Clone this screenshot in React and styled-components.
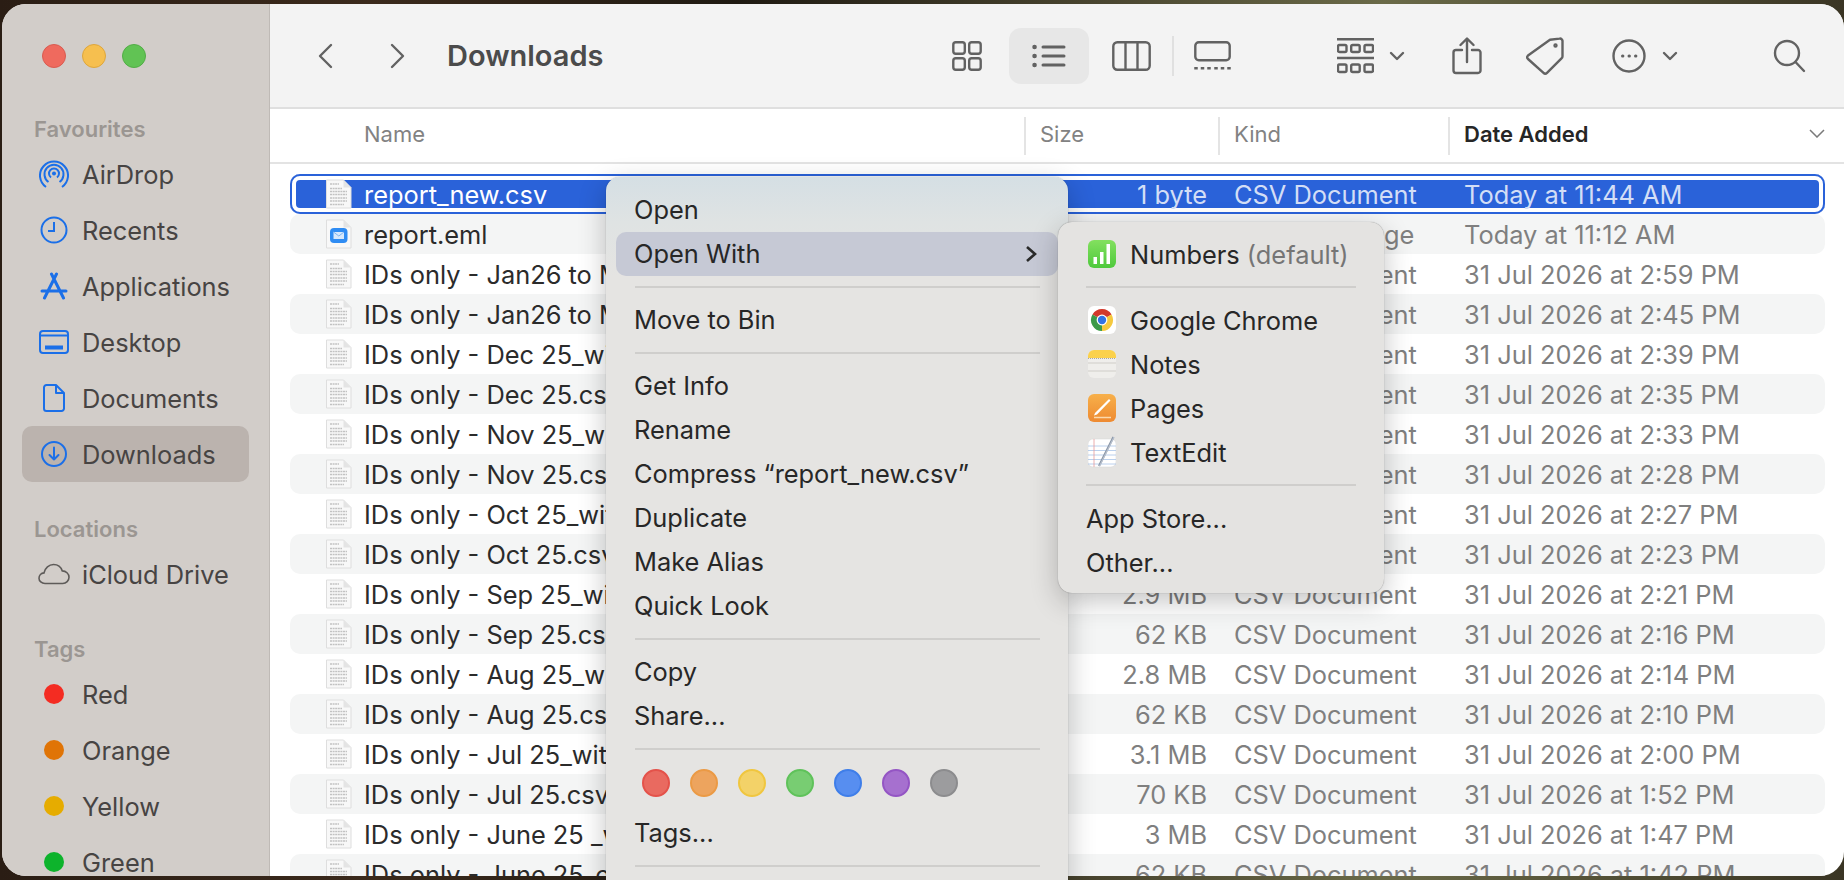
import React from 'react'
import styled, { createGlobalStyle } from 'styled-components'

const Global = createGlobalStyle`
  html, body {
    margin: 0;
    height: 100%;
    overflow: hidden;
    background: linear-gradient(90deg, #2a1d14 0%, #3b2a1c 20%, #1f1a12 40%, #4a4630 60%, #6a6a48 75%, #3a3524 100%);
    font-family: Inter, "Liberation Sans", sans-serif;
  }
`

const Page = styled.div`
  position: relative;
  height: 880px;
  box-sizing: border-box;
  padding: 4px 0 4px 2px;
  overflow: hidden;
`

const Window = styled.div`
  display: flex;
  height: 872px;
  border-radius: 24px;
  overflow: hidden;
  background: #fff;
`

const Sidebar = styled.aside`
  flex: none;
  width: 268px;
  box-sizing: border-box;
  padding: 40px 20px 0;
  background: #d2cdc9;
  border-right: 1px solid #bfbab6;
`

const Lights = styled.div`
  display: flex;
  gap: 16px;
  padding-left: 20px;
  margin-bottom: 47px;
`

const Light = styled.span`
  width: 24px;
  height: 24px;
  box-sizing: border-box;
  border-radius: 50%;
  background: ${p => p.$bg};
  border: 1px solid ${p => p.$edge};
`

const SideLabel = styled.div`
  height: 28px;
  line-height: 28px;
  padding-left: 12px;
  margin-top: ${p => p.$top || 0}px;
  margin-bottom: 3px;
  font-size: 22px;
  font-weight: 600;
  color: #9b9692;
`

const SideItem = styled.div`
  display: flex;
  align-items: center;
  height: 56px;
  border-radius: 10px;
  background: ${p => (p.$active ? '#bbb3ae' : 'transparent')};
  font-size: 25.400px;
  color: #474443;
`

const SideIconBox = styled.span`
  flex: none;
  display: flex;
  justify-content: center;
  width: 64px;
  margin-right: -4px;
`

const TagDot = styled.span`
  width: 20px;
  height: 20px;
  border-radius: 50%;
  background: ${p => p.$color};
`

const Main = styled.main`
  flex: 1;
  min-width: 0;
  display: flex;
  flex-direction: column;
`

const Toolbar = styled.header`
  flex: none;
  display: flex;
  align-items: center;
  height: 105px;
  box-sizing: border-box;
  padding: 0 38px 0 47px;
  background: #f3f3f3;
  border-bottom: 2px solid #dfdfdf;
`

const Title = styled.h1`
  flex: 1;
  margin: 0 0 0 41px;
  font-size: 29px;
  font-weight: 600;
  color: #4b4b4b;
`

const ToolIcon = styled.svg`
  flex: none;
  margin-left: ${p => p.$ml || 0}px;
  fill: none;
  stroke: #626262;
  stroke-width: 2.400;
  stroke-linecap: round;
  stroke-linejoin: round;
`

const ViewButton = styled.div`
  flex: none;
  display: flex;
  align-items: center;
  justify-content: center;
  width: 80px;
  height: 56px;
  margin-left: 27px;
  border-radius: 12px;
  background: #e7e7e7;
`

const ToolSep = styled.span`
  flex: none;
  width: 2px;
  height: 40px;
  margin-left: 21px;
  background: #e0e0e0;
`

const ColumnBar = styled.div`
  flex: none;
  display: flex;
  align-items: center;
  height: 55px;
  box-sizing: border-box;
  background: #fff;
  border-bottom: 2px solid #e3e3e3;
  font-size: 22px;
  color: #828282;
`

const Column = styled.div`
  flex: ${p => (p.$w ? `none` : 1)};
  display: flex;
  align-items: center;
  justify-content: space-between;
  width: ${p => (p.$w ? `${p.$w}px` : 'auto')};
  height: 38px;
  box-sizing: border-box;
  padding: 0 19px 4px ${p => p.$pad}px;
  border-left: ${p => (p.$first ? 'none' : '2px solid #e4e4e4')};
  font-weight: ${p => (p.$sorted ? 600 : 400)};
  color: ${p => (p.$sorted ? '#262626' : '#828282')};
`

const List = styled.div`
  flex: 1;
  min-height: 0;
  padding: 10px 19px 0 20px;
  overflow: hidden;
`

const Row = styled.div`
  display: flex;
  align-items: center;
  height: 40px;
  border-radius: 10px;
  font-size: 25.400px;
  white-space: nowrap;
  background: ${p => (p.$selected ? '#2a62d9' : p.$odd ? '#f4f5f5' : '#fff')};
  box-shadow: ${p => (p.$selected ? 'inset 0 0 0 2px #2a62d9, inset 0 0 0 6px #fff' : 'none')};
`

const NameCell = styled.div`
  flex: none;
  display: flex;
  align-items: center;
  gap: 12px;
  width: 735px;
  box-sizing: border-box;
  padding-left: 36px;
  overflow: hidden;
  color: ${p => (p.$selected ? '#fff' : '#2b2b2b')};
`

const SizeCell = styled.div`
  flex: none;
  width: 182px;
  text-align: right;
  color: ${p => (p.$selected ? '#d3def6' : '#7f7f7f')};
`

const KindCell = styled.div`
  flex: none;
  width: 230px;
  margin-left: 27px;
  color: ${p => (p.$selected ? '#d3def6' : '#7f7f7f')};
`

const DateCell = styled.div`
  flex: 1;
  color: ${p => (p.$selected ? '#d3def6' : '#7f7f7f')};
`

const Menu = styled.div`
  position: absolute;
  left: ${p => p.$left}px;
  top: ${p => p.$top}px;
  width: ${p => p.$width}px;
  height: ${p => (p.$height ? `${p.$height}px` : 'auto')};
  box-sizing: border-box;
  padding: ${p => p.$pad};
  border-radius: ${p => p.$radius};
  background: ${p => p.$bg};
  box-shadow: 0 0 1px rgba(0, 0, 0, 0.45), 0 8px 28px rgba(0, 0, 0, 0.24);
  font-size: 25.400px;
  color: #272727;
`

const MenuItem = styled.div`
  display: flex;
  align-items: center;
  justify-content: space-between;
  height: 44px;
  padding: 0 20px 0 ${p => p.$indent}px;
  border-radius: 10px;
  background: ${p => (p.$active ? '#c6c9d5' : 'transparent')};
  white-space: nowrap;
`

const AppItem = styled.div`
  display: flex;
  align-items: center;
  gap: 14px;
  height: 44px;
  padding-left: 30px;
  white-space: nowrap;
`

const Muted = styled.span`
  color: #757575;
`

const MenuSep = styled.div`
  height: 2px;
  margin: 10px ${p => p.$right}px 10px ${p => p.$left}px;
  background: #cfcecc;
`

const ColorRow = styled.div`
  display: flex;
  align-items: center;
  gap: 20px;
  height: 51px;
  padding: 0 0 5px 26px;
  box-sizing: border-box;
`

const ColorDot = styled.span`
  width: 28px;
  height: 28px;
  box-sizing: border-box;
  border-radius: 50%;
  background: ${p => p.$color};
  border: 2px solid ${p => p.$edge};
`

const FileIcon = ({ mail }) => (
  <svg width="26" height="30" viewBox="0 0 26 30" style={{ flex: 'none' }}>
    <path d="M.5 1h17L25 8.500V29H.5z" fill="#f8f8f8" stroke="#dedede" strokeWidth="1" />
    <path d="M17.500 1v7.500H25z" fill="#e4e4e4" />
    {mail ? (
      <g>
        <rect x="4" y="9" width="17.500" height="15" rx="4" fill="#2f8cf3" />
        <path d="M7.500 13h10.500v7H7.500z" fill="#d6e8fc" />
        <path d="M7.500 13l5.300 4 5.200-4" fill="none" stroke="#7db4f2" strokeWidth="1" />
      </g>
    ) : (
      <g stroke="#c2c2c2" strokeWidth="1.700" strokeDasharray="2 .6">
        <path d="M4 5h9M4 9.500h12M4 12.500h17M4 15.500h17M4 19h17M4 22h17M4 25.500h14" />
      </g>
    )}
  </svg>
)

const blue = '#1b6fe8'

const AirDropIcon = () => (
  <svg width="30" height="34" viewBox="0 0 30 34" fill="none" stroke={blue} strokeWidth="2">
    <path d="M7 30A14 14 0 1 1 23 30" />
    <path d="M9.500 25A9.500 9.500 0 1 1 20.500 25" />
    <path d="M12 20.500A5 5 0 1 1 18 20.500" />
    <circle cx="15" cy="16.500" r="2" fill={blue} stroke="none" />
  </svg>
)

const ClockIcon = () => (
  <svg width="28" height="28" viewBox="0 0 28 28" fill="none" stroke={blue} strokeWidth="2">
    <circle cx="14" cy="14" r="12.500" />
    <path d="M14 6v9H8" />
  </svg>
)

const AppsIcon = () => (
  <svg width="28" height="28" viewBox="0 0 28 28" fill="none" stroke={blue} strokeWidth="3" strokeLinecap="round">
    <path d="M16.500 2L6 23M11.500 2L22 23M2 19h24M4.500 26l1.500-3M23.500 26l-1.500-3" />
  </svg>
)

const DesktopIcon = () => (
  <svg width="30" height="24" viewBox="0 0 30 24" fill="none" stroke={blue} strokeWidth="2">
    <rect x="1" y="1" width="28" height="22" rx="3" />
    <path d="M1 5.500h28" />
    <rect x="6" y="15.500" width="18" height="4" fill={blue} stroke="none" />
  </svg>
)

const DocIcon = () => (
  <svg width="22" height="28" viewBox="0 0 22 28" fill="none" stroke={blue} strokeWidth="2" strokeLinejoin="round">
    <path d="M3.500 1H13l8 8v15.500a2.500 2.500 0 0 1-2.500 2.500h-15A2.500 2.500 0 0 1 1 24.500v-21A2.500 2.500 0 0 1 3.500 1z" />
    <path d="M13 1v8h8" />
  </svg>
)

const DownloadIcon = () => (
  <svg width="26" height="26" viewBox="0 0 26 26" fill="none" stroke={blue} strokeWidth="2" strokeLinecap="round" strokeLinejoin="round">
    <circle cx="13" cy="13" r="12" />
    <path d="M13 6.500v12M8.500 14l4.500 4.500 4.500-4.500" />
  </svg>
)

const CloudIcon = () => (
  <svg width="32" height="22" viewBox="0 0 32 22" fill="none" stroke="#5e5b59" strokeWidth="1.600">
    <path d="M7 20.500c-3.300 0-6-2.300-6-5.300 0-2.800 2.200-5 5-5.300C7 5 11 1.500 15.500 1.500c4.300 0 7.600 2.800 8.800 6.400 3.600 0 6.700 2.900 6.700 6.400 0 3.400-2.800 6.200-6.300 6.200z" />
  </svg>
)

const NumbersIcon = () => (
  <svg width="28" height="28" viewBox="0 0 28 28" style={{ flex: 'none' }}>
    <defs>
      <linearGradient id="numbersFill" x1="0" y1="0" x2="0" y2="1">
        <stop offset="0" stopColor="#83e05f" />
        <stop offset="1" stopColor="#4ec93c" />
      </linearGradient>
    </defs>
    <rect width="28" height="28" rx="6" fill="url(#numbersFill)" />
    <path d="M5.500 17h3.500v7H5.500zM12 12h3.500v12H12zM18.500 4h3.500v20h-3.500z" fill="#fff" />
  </svg>
)

const ChromeIcon = () => (
  <svg width="28" height="28" viewBox="0 0 28 28" style={{ flex: 'none' }}>
    <rect width="28" height="28" rx="6" fill="#fff" />
    <path d="M14 14L4.470 8.500A11 11 0 0 1 23.530 8.500z" fill="#d2392c" />
    <path d="M14 14L23.530 8.500A11 11 0 0 1 14 25z" fill="#f5c93f" />
    <path d="M14 14L14 25A11 11 0 0 1 4.470 8.500z" fill="#3c9a48" />
    <circle cx="14" cy="14" r="5.400" fill="#fff" />
    <circle cx="14" cy="14" r="4.200" fill="#3273e4" />
  </svg>
)

const NotesIcon = () => (
  <svg width="28" height="28" viewBox="0 0 28 28" style={{ flex: 'none' }}>
    <rect width="28" height="28" rx="6" fill="#efeeeb" />
    <path d="M0 8V6a6 6 0 0 1 6-6h16a6 6 0 0 1 6 6v2z" fill="#fbd14b" />
    <path d="M0 13h28M0 21h28" stroke="#cfcdc8" strokeWidth="1" />
    <path d="M0 8.500h28" stroke="#a9a79f" strokeWidth="1" strokeDasharray="1 1" />
  </svg>
)

const PagesIcon = () => (
  <svg width="28" height="28" viewBox="0 0 28 28" style={{ flex: 'none' }}>
    <defs>
      <linearGradient id="pagesFill" x1="0" y1="0" x2="0" y2="1">
        <stop offset="0" stopColor="#f7b04a" />
        <stop offset="1" stopColor="#ee8a31" />
      </linearGradient>
    </defs>
    <rect width="28" height="28" rx="6" fill="url(#pagesFill)" />
    <path d="M7 19L21 5l1.500 1.500L9 20.500 6 21.500z" fill="#fff" />
    <path d="M6 23.500h17" stroke="#fbd9ad" strokeWidth="1.500" />
  </svg>
)

const TextEditIcon = () => (
  <svg width="28" height="32" viewBox="0 0 28 32" style={{ flex: 'none' }}>
    <rect y="3" width="28" height="28" rx="5" fill="#fff" stroke="#d4d4d4" strokeWidth=".5" />
    <path d="M0 10h28M0 14.500h28M0 19h28M0 23.500h28M0 28h28" stroke="#a8c4e8" strokeWidth=".8" />
    <path d="M6 3v28" stroke="#e79a9a" strokeWidth=".8" />
    <path d="M25.500 1L11 30" stroke="#8b97a8" strokeWidth="2.200" />
    <path d="M26 1L11.500 30" stroke="#d5dde8" strokeWidth=".7" />
  </svg>
)

const files = [
  ['report_new.csv', '1 byte', 'CSV Document', 'Today at 11:44 AM'],
  ['report.eml', '4 KB', 'Email Message', 'Today at 11:12 AM'],
  ['IDs only - Jan26 to Mar26_with_emails.csv', '3.2 MB', 'CSV Document', '31 Jul 2026 at 2:59 PM'],
  ['IDs only - Jan26 to Mar26.csv', '70 KB', 'CSV Document', '31 Jul 2026 at 2:45 PM'],
  ['IDs only - Dec 25_with_emails.csv', '3 MB', 'CSV Document', '31 Jul 2026 at 2:39 PM'],
  ['IDs only - Dec 25.csv', '62 KB', 'CSV Document', '31 Jul 2026 at 2:35 PM'],
  ['IDs only - Nov 25_with_emails.csv', '2.9 MB', 'CSV Document', '31 Jul 2026 at 2:33 PM'],
  ['IDs only - Nov 25.csv', '62 KB', 'CSV Document', '31 Jul 2026 at 2:28 PM'],
  ['IDs only - Oct 25_with_emails.csv', '3 MB', 'CSV Document', '31 Jul 2026 at 2:27 PM'],
  ['IDs only - Oct 25.csv', '66 KB', 'CSV Document', '31 Jul 2026 at 2:23 PM'],
  ['IDs only - Sep 25_with_emails.csv', '2.9 MB', 'CSV Document', '31 Jul 2026 at 2:21 PM'],
  ['IDs only - Sep 25.csv', '62 KB', 'CSV Document', '31 Jul 2026 at 2:16 PM'],
  ['IDs only - Aug 25_with_emails.csv', '2.8 MB', 'CSV Document', '31 Jul 2026 at 2:14 PM'],
  ['IDs only - Aug 25.csv', '62 KB', 'CSV Document', '31 Jul 2026 at 2:10 PM'],
  ['IDs only - Jul 25_with_emails.csv', '3.1 MB', 'CSV Document', '31 Jul 2026 at 2:00 PM'],
  ['IDs only - Jul 25.csv', '70 KB', 'CSV Document', '31 Jul 2026 at 1:52 PM'],
  ['IDs only - June 25 _with_emails.csv', '3 MB', 'CSV Document', '31 Jul 2026 at 1:47 PM'],
  ['IDs only - June 25_emails.csv', '62 KB', 'CSV Document', '31 Jul 2026 at 1:42 PM'],
]

const places = [
  ['AirDrop', <AirDropIcon />],
  ['Recents', <ClockIcon />],
  ['Applications', <AppsIcon />],
  ['Desktop', <DesktopIcon />],
  ['Documents', <DocIcon />],
  ['Downloads', <DownloadIcon />],
]

const tags = [
  ['Red', '#f42c22'],
  ['Orange', '#e07406'],
  ['Yellow', '#e6ac00'],
  ['Green', '#0db32c'],
]

const menuColors = [
  ['#e96a60', '#e4524a'],
  ['#eda45e', '#eb9a45'],
  ['#f3d268', '#f0c63f'],
  ['#78cd72', '#5fc25a'],
  ['#578ef0', '#3f7ee9'],
  ['#a670cf', '#9455c4'],
  ['#9c9c9e', '#8c8c8e'],
]

const Sep = () => <MenuSep $left={19} $right={18} />
const SubSep = () => <MenuSep $left={28} $right={28} />

export default function App() {
  return (
    <Page>
      <Global />
      <Window>
        <Sidebar>
          <Lights>
            <Light $bg="#ef6a5e" $edge="#d95b50" />
            <Light $bg="#f6bf4f" $edge="#dea63c" />
            <Light $bg="#61c354" $edge="#52ad46" />
          </Lights>
          <SideLabel>Favourites</SideLabel>
          {places.map(([label, icon]) => (
            <SideItem key={label} $active={label === 'Downloads'}>
              <SideIconBox>{icon}</SideIconBox>
              {label}
            </SideItem>
          ))}
          <SideLabel $top={33}>Locations</SideLabel>
          <SideItem>
            <SideIconBox><CloudIcon /></SideIconBox>
            iCloud Drive
          </SideItem>
          <SideLabel $top={33}>Tags</SideLabel>
          {tags.map(([label, color]) => (
            <SideItem key={label}>
              <SideIconBox><TagDot $color={color} /></SideIconBox>
              {label}
            </SideItem>
          ))}
        </Sidebar>
        <Main>
          <Toolbar>
            <ToolIcon width="16" height="26" viewBox="0 0 16 26" strokeWidth="3"><path d="M14 2L3 13l11 11" /></ToolIcon>
            <ToolIcon width="16" height="26" viewBox="0 0 16 26" $ml={57}><path d="M2 2l11 11L2 24" /></ToolIcon>
            <Title>Downloads</Title>
            <ToolIcon width="30" height="30" viewBox="0 0 30 30">
              <rect x="1.300" y="1.300" width="11.500" height="11.500" rx="2.500" />
              <rect x="17.200" y="1.300" width="11.500" height="11.500" rx="2.500" />
              <rect x="1.300" y="17.200" width="11.500" height="11.500" rx="2.500" />
              <rect x="17.200" y="17.200" width="11.500" height="11.500" rx="2.500" />
            </ToolIcon>
            <ViewButton>
              <ToolIcon width="34" height="24" viewBox="0 0 34 24">
                <path d="M11 3h21M11 12h21M11 21h21" strokeWidth="3" />
                <path d="M2.500 3h.1M2.500 12h.1M2.500 21h.1" strokeWidth="4.500" />
              </ToolIcon>
            </ViewButton>
            <ToolIcon width="39" height="30" viewBox="0 0 39 30" $ml={23}>
              <rect x="1.300" y="1.300" width="36.400" height="27.400" rx="4" />
              <path d="M13.500 1.300v27.400M25.500 1.300v27.400" />
            </ToolIcon>
            <ToolSep />
            <ToolIcon width="37" height="30" viewBox="0 0 37 30" $ml={20}>
              <rect x="1.300" y="1.300" width="34.400" height="18" rx="3.500" />
              <path d="M2 26v2.500M8.500 26v2.500M15 26v2.500M22 26v2.500M28.500 26v2.500M35 26v2.500" strokeWidth="3.500" strokeLinecap="butt" />
            </ToolIcon>
            <ToolIcon width="37" height="36" viewBox="0 0 37 36" $ml={106} strokeWidth="2.200">
              <path d="M0 1.200h37M0 20h37" strokeLinecap="butt" />
              <rect x="1" y="7" width="8.500" height="7" rx="1.500" />
              <rect x="14.200" y="7" width="8.500" height="7" rx="1.500" />
              <rect x="27.500" y="7" width="8.500" height="7" rx="1.500" />
              <rect x="1" y="26.500" width="8.500" height="7.500" rx="1.500" />
              <rect x="14.200" y="26.500" width="8.500" height="7.500" rx="1.500" />
              <rect x="27.500" y="26.500" width="8.500" height="7.500" rx="1.500" />
            </ToolIcon>
            <ToolIcon width="16" height="10" viewBox="0 0 16 10" $ml={15} strokeWidth="3"><path d="M2 2l6 6 6-6" /></ToolIcon>
            <ToolIcon width="30" height="38" viewBox="0 0 30 38" $ml={47}>
              <path d="M10 13H4a2.500 2.500 0 0 0-2.500 2.500v18A2.500 2.500 0 0 0 4 36h22a2.500 2.500 0 0 0 2.500-2.500v-18A2.500 2.500 0 0 0 26 13h-6" />
              <path d="M15 25V2M8.500 8L15 1.500 21.500 8" />
            </ToolIcon>
            <ToolIcon width="38" height="38" viewBox="0 0 38 38" $ml={44}>
              <path d="M24 2.800L33.500 1.600a2.600 2.600 0 0 1 3 3L36.500 19a3 3 0 0 1-1 2.400L21 35.800a2.500 2.500 0 0 1-3.500 0L2 22a2.500 2.500 0 0 1 0-3.500z" />
              <circle cx="29.500" cy="8.500" r="1" />
            </ToolIcon>
            <ToolIcon width="34" height="34" viewBox="0 0 34 34" $ml={48}>
              <circle cx="17" cy="17" r="15.500" />
              <path d="M10.500 17h.4M17 17h.4M23.500 17h.4" strokeWidth="3" />
            </ToolIcon>
            <ToolIcon width="16" height="10" viewBox="0 0 16 10" $ml={16} strokeWidth="3"><path d="M2 2l6 6 6-6" /></ToolIcon>
            <ToolIcon width="33" height="34" viewBox="0 0 33 34" $ml={95} strokeWidth="3">
              <circle cx="14" cy="14" r="12" />
              <path d="M22.500 23L31 32" />
            </ToolIcon>
          </Toolbar>
          <ColumnBar>
            <Column $w={754} $pad={94} $first>Name</Column>
            <Column $w={194} $pad={14}>Size</Column>
            <Column $w={230} $pad={14}>Kind</Column>
            <Column $pad={14} $sorted>
              Date Added
              <svg width="16" height="9" viewBox="0 0 16 9" fill="none" stroke="#7a7a7a" strokeWidth="1.500"><path d="M1 1l7 7 7-7" /></svg>
            </Column>
          </ColumnBar>
          <List>
            {files.map(([name, size, kind, date], i) => {
              const selected = i === 0
              return (
                <Row key={date} $selected={selected} $odd={i % 2 === 1}>
                  <NameCell $selected={selected}>
                    <FileIcon mail={name.endsWith('.eml')} />
                    {name}
                  </NameCell>
                  <SizeCell $selected={selected}>{size}</SizeCell>
                  <KindCell $selected={selected}>{kind}</KindCell>
                  <DateCell $selected={selected}>{date}</DateCell>
                </Row>
              )
            })}
          </List>
        </Main>
      </Window>

      <Menu
        $left={606}
        $top={177}
        $width={462}
        $height={720}
        $pad="10.500px 10px 0"
        $radius="14px 14px 0 0"
        $bg="linear-gradient(180deg, #d5dfe4 0, #dfe3e3 45px, #e5e4e2 100px)"
      >
        <MenuItem $indent={18}>Open</MenuItem>
        <MenuItem $indent={18} $active>
          Open With
          <svg width="13" height="26" viewBox="0 0 13 26" fill="none" stroke="#2a2a2a" strokeWidth="2.600"><path d="M2 6l8 7-8 7" /></svg>
        </MenuItem>
        <Sep />
        <MenuItem $indent={18}>Move to Bin</MenuItem>
        <Sep />
        <MenuItem $indent={18}>Get Info</MenuItem>
        <MenuItem $indent={18}>Rename</MenuItem>
        <MenuItem $indent={18}>Compress “report_new.csv”</MenuItem>
        <MenuItem $indent={18}>Duplicate</MenuItem>
        <MenuItem $indent={18}>Make Alias</MenuItem>
        <MenuItem $indent={18}>Quick Look</MenuItem>
        <Sep />
        <MenuItem $indent={18}>Copy</MenuItem>
        <MenuItem $indent={18}>Share...</MenuItem>
        <Sep />
        <ColorRow>
          {menuColors.map(([color, edge]) => (
            <ColorDot key={color} $color={color} $edge={edge} />
          ))}
        </ColorRow>
        <MenuItem $indent={18}>Tags...</MenuItem>
        <Sep />
      </Menu>

      <Menu
        $left={1058}
        $top={222}
        $width={326}
        $pad="10px 0 9px"
        $radius="14px"
        $bg="#e4e3e1"
      >
        <AppItem><NumbersIcon /><span>Numbers <Muted>(default)</Muted></span></AppItem>
        <SubSep />
        <AppItem><ChromeIcon />Google Chrome</AppItem>
        <AppItem><NotesIcon />Notes</AppItem>
        <AppItem><PagesIcon />Pages</AppItem>
        <AppItem><TextEditIcon />TextEdit</AppItem>
        <SubSep />
        <MenuItem $indent={28}>App Store...</MenuItem>
        <MenuItem $indent={28}>Other...</MenuItem>
      </Menu>
    </Page>
  )
}
